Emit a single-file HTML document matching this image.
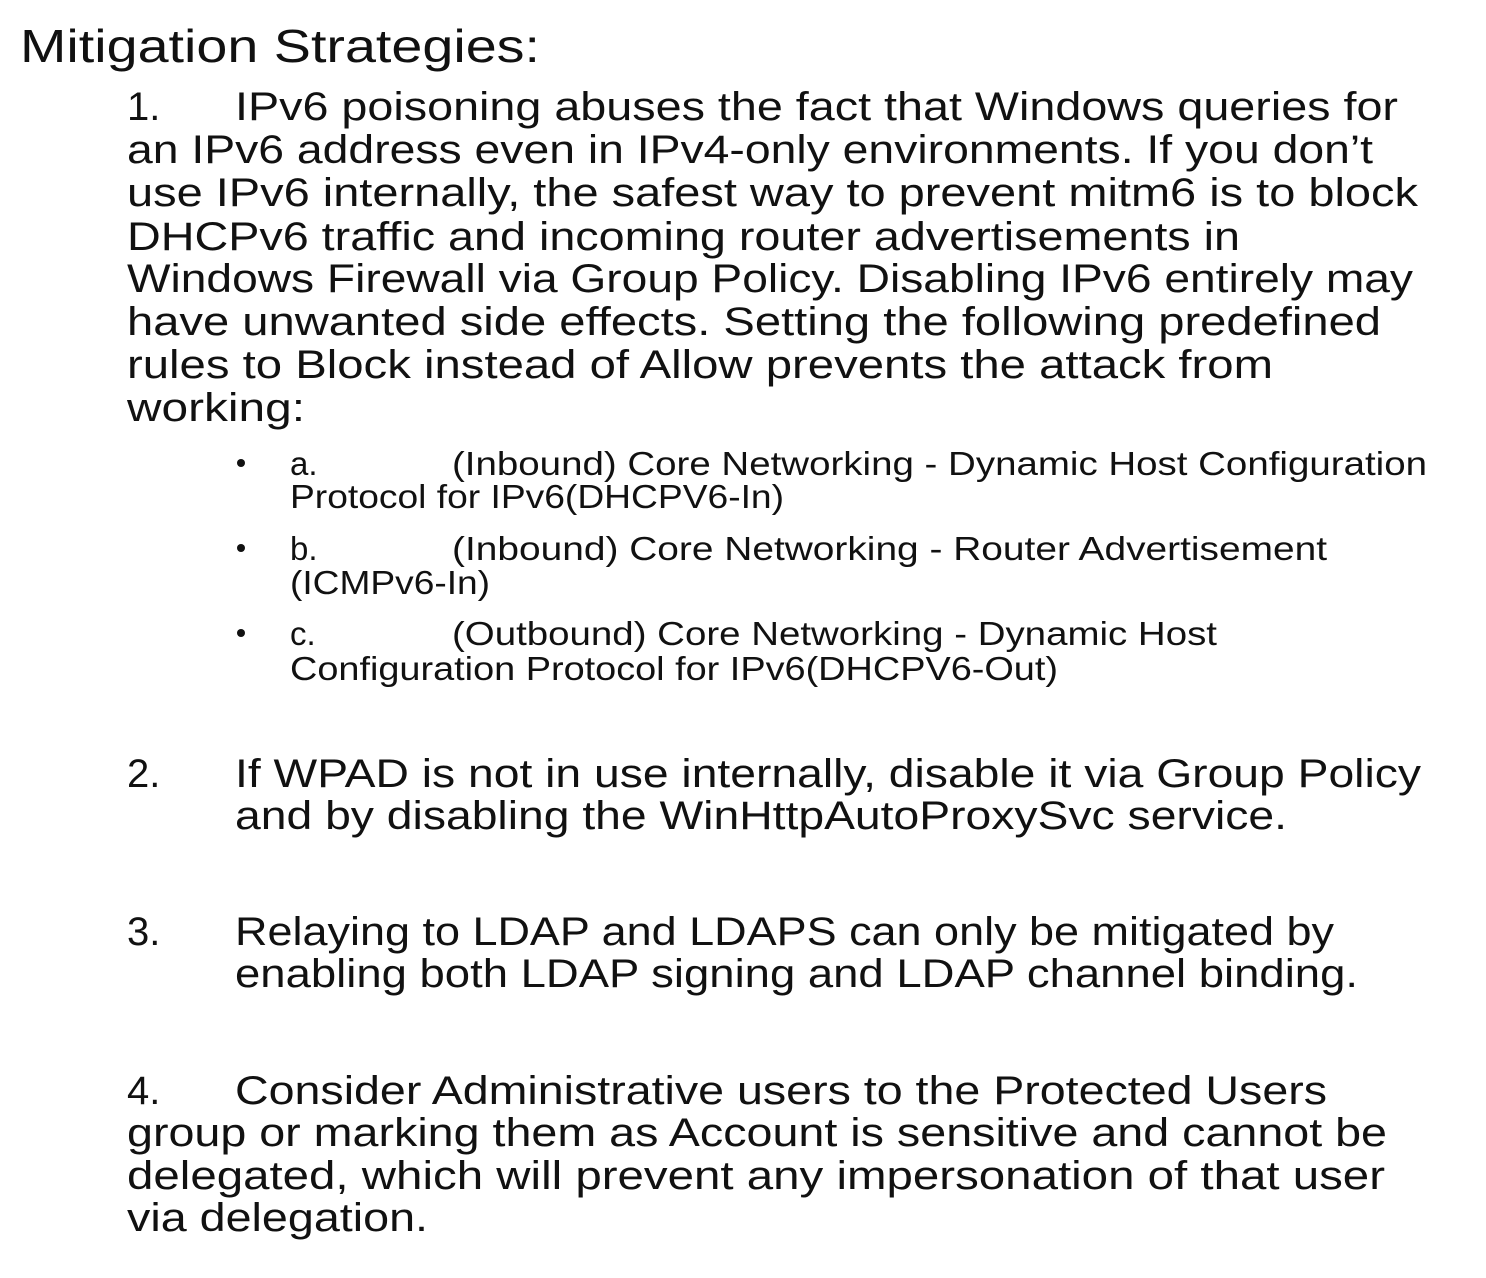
<!DOCTYPE html>
<html><head><meta charset="utf-8"><style>
html,body{margin:0;padding:0;background:#fff;}
svg{display:block;}
text{font-family:"Liberation Sans",sans-serif;fill:#111;}
.b{font-size:40px;}
.s{font-size:33px;}
</style></head><body>
<svg width="1486" height="1278" viewBox="0 0 1486 1278" xmlns="http://www.w3.org/2000/svg">
<text x="20" y="62" style="font-size:46px" textLength="520" lengthAdjust="spacingAndGlyphs">Mitigation Strategies:</text>

<text class="b" x="127" y="120">1.</text>
<text class="b" x="235" y="120" textLength="1163" lengthAdjust="spacingAndGlyphs">IPv6 poisoning abuses the fact that Windows queries for</text>
<text class="b" x="127" y="163" textLength="1246" lengthAdjust="spacingAndGlyphs">an IPv6 address even in IPv4-only environments. If you don’t</text>
<text class="b" x="127" y="206" textLength="1291" lengthAdjust="spacingAndGlyphs">use IPv6 internally, the safest way to prevent mitm6 is to block</text>
<text class="b" x="127" y="250" textLength="1113" lengthAdjust="spacingAndGlyphs">DHCPv6 traffic and incoming router advertisements in</text>
<text class="b" x="127" y="292" textLength="1286" lengthAdjust="spacingAndGlyphs">Windows Firewall via Group Policy. Disabling IPv6 entirely may</text>
<text class="b" x="127" y="335" textLength="1254" lengthAdjust="spacingAndGlyphs">have unwanted side effects. Setting the following predefined</text>
<text class="b" x="127" y="378" textLength="1146" lengthAdjust="spacingAndGlyphs">rules to Block instead of Allow prevents the attack from</text>
<text class="b" x="127" y="421" textLength="178" lengthAdjust="spacingAndGlyphs">working:</text>

<circle cx="241" cy="463" r="4" fill="#111"/>
<text class="s" x="290" y="475">a.</text>
<text class="s" x="452" y="475" textLength="975" lengthAdjust="spacingAndGlyphs">(Inbound) Core Networking - Dynamic Host Configuration</text>
<text class="s" x="290" y="508" textLength="494" lengthAdjust="spacingAndGlyphs">Protocol for IPv6(DHCPV6-In)</text>

<circle cx="241" cy="548" r="4" fill="#111"/>
<text class="s" x="290" y="560">b.</text>
<text class="s" x="452" y="560" textLength="875" lengthAdjust="spacingAndGlyphs">(Inbound) Core Networking - Router Advertisement</text>
<text class="s" x="290" y="594" textLength="200" lengthAdjust="spacingAndGlyphs">(ICMPv6-In)</text>

<circle cx="241" cy="633" r="4" fill="#111"/>
<text class="s" x="290" y="645">c.</text>
<text class="s" x="452" y="645" textLength="765" lengthAdjust="spacingAndGlyphs">(Outbound) Core Networking - Dynamic Host</text>
<text class="s" x="290" y="680" textLength="768" lengthAdjust="spacingAndGlyphs">Configuration Protocol for IPv6(DHCPV6-Out)</text>

<text class="b" x="127" y="787">2.</text>
<text class="b" x="235" y="787" textLength="1186" lengthAdjust="spacingAndGlyphs">If WPAD is not in use internally, disable it via Group Policy</text>
<text class="b" x="235" y="829" textLength="1052" lengthAdjust="spacingAndGlyphs">and by disabling the WinHttpAutoProxySvc service.</text>

<text class="b" x="127" y="945">3.</text>
<text class="b" x="235" y="945" textLength="1099" lengthAdjust="spacingAndGlyphs">Relaying to LDAP and LDAPS can only be mitigated by</text>
<text class="b" x="235" y="987" textLength="1123" lengthAdjust="spacingAndGlyphs">enabling both LDAP signing and LDAP channel binding.</text>

<text class="b" x="127" y="1104">4.</text>
<text class="b" x="235" y="1104" textLength="1092" lengthAdjust="spacingAndGlyphs">Consider Administrative users to the Protected Users</text>
<text class="b" x="127" y="1146" textLength="1260" lengthAdjust="spacingAndGlyphs">group or marking them as Account is sensitive and cannot be</text>
<text class="b" x="127" y="1189" textLength="1258" lengthAdjust="spacingAndGlyphs">delegated, which will prevent any impersonation of that user</text>
<text class="b" x="127" y="1231" textLength="301" lengthAdjust="spacingAndGlyphs">via delegation.</text>
</svg>
</body></html>
